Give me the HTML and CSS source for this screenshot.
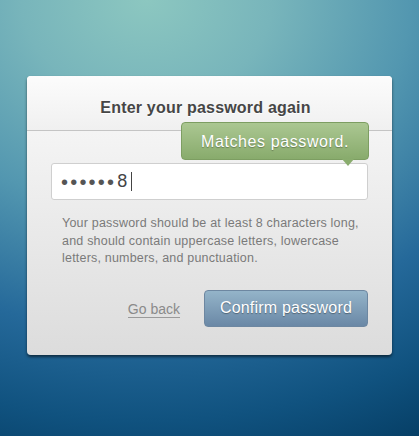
FILE: index.html
```html
<!DOCTYPE html>
<html lang="en">
<head>
    <meta charset="UTF-8">
    <meta name="viewport" content="width=device-width, initial-scale=1.0">
    <title>Enter your password again</title>
    <link rel="stylesheet" href="styles.css">
</head>
<body>
    <div class="dialog">
        <div class="dialog-header">
            <h2>Enter your password again</h2>
        </div>
        <div class="dialog-body">
            <div class="tooltip">Matches password.</div>
            <div class="field">
                <span class="dots">&bull;&bull;&bull;&bull;&bull;&bull;</span><span class="last">8</span><span class="caret"></span>
            </div>
            <p class="hint">Your password should be at least 8 characters long, and should contain uppercase letters, lowercase letters, numbers, and punctuation.</p>
            <div class="actions">
                <a href="#" class="back">Go back</a>
                <button class="confirm">Confirm password</button>
            </div>
        </div>
    </div>
</body>
</html>
```

FILE: styles.css
```css
html, body {
    margin: 0;
    height: 100%;
}
body {
    font-family: "Liberation Sans", Arial, sans-serif;
    background: radial-gradient(ellipse 150% 115% at 35% 0%, #8cc7c0 0%, #78b5bb 20%, #5397b0 42%, #25699a 66%, #10527f 84%, #043b61 100%);
    overflow: hidden;
    padding-top: 76px;
    box-sizing: border-box;
}
.dialog {
    position: relative;
    width: 365px;
    margin-left: 27px;
    border-radius: 4px;
    background: linear-gradient(#fafafa, #dcdcdc);
    box-shadow: 0 2px 3px rgba(0, 0, 0, 0.55);
}
.dialog-header {
    height: 55px;
    border-bottom: 1px solid #c4c4c4;
    background: linear-gradient(#fcfcfc, #f0f0f0);
    border-radius: 4px 4px 0 0;
    box-sizing: border-box;
    padding: 23px 8px 0 0;
}
.dialog-header h2 {
    margin: 0;
    text-align: center;
    font-size: 16px;
    letter-spacing: 0.2px;
    color: #464646;
    text-shadow: 0 1px 0 #fff;
}
.dialog-body {
    padding: 32px 24px 28px;
}
.tooltip {
    position: absolute;
    top: 46px;
    left: 154px;
    width: 188px;
    height: 38px;
    line-height: 38px;
    text-align: center;
    font-size: 16px;
    letter-spacing: 0.6px;
    color: #fff;
    text-shadow: 0 1px 1px rgba(0, 0, 0, 0.3);
    background: linear-gradient(#abc792, #88ab6c);
    border: 1px solid #7d9e62;
    box-sizing: border-box;
    border-radius: 4px;
    z-index: 2;
}
.tooltip::after {
    content: "";
    position: absolute;
    right: 14px;
    bottom: -7px;
    border-left: 6px solid transparent;
    border-right: 6px solid transparent;
    border-top: 7px solid #89ac6d;
}
.field {
    height: 37px;
    box-sizing: border-box;
    background: #fff;
    border: 1px solid #cfcfcf;
    border-radius: 3px;
    display: flex;
    align-items: center;
    padding-left: 9px;
    font-size: 18px;
    color: #444;
}
.dots {
    font-size: 20px;
    line-height: 20px;
    letter-spacing: 2.2px;
    color: #555;
}
.last {
    margin-left: 1px;
}
.caret {
    display: inline-block;
    width: 1px;
    height: 19px;
    background: #444;
    margin-left: 4px;
}
.hint {
    margin: 15px 0 0 11px;
    font-size: 12.5px;
    letter-spacing: 0.2px;
    line-height: 17.5px;
    color: #7a7a7a;
}
.actions {
    display: flex;
    justify-content: flex-end;
    align-items: center;
    gap: 24px;
    margin-top: 22px;
}
.back {
    color: #8a8a8a;
    font-size: 14px;
    text-decoration: none;
    border-bottom: 1px solid #9a9a9a;
    line-height: 16px;
    margin-top: 3px;
}
.confirm {
    width: 164px;
    height: 37px;
    font-family: inherit;
    font-size: 16px;
    letter-spacing: 0.2px;
    color: #fff;
    text-shadow: 0 1px 1px rgba(0, 0, 0, 0.35);
    background: linear-gradient(#94b4c9, #6a88a6);
    border: 1px solid #6d87a1;
    border-radius: 4px;
    cursor: pointer;
}
```
